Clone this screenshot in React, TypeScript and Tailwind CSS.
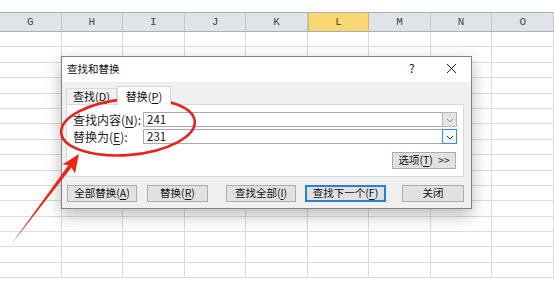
import React from 'react';

const cols = ['G', 'H', 'I', 'J', 'K', 'L', 'M', 'N', 'O'];
const rows = Array.from({ length: 16 }, (_, i) => i);

const Hot = ({ text, k }: { text: string; k: string }) => (
  <span>
    {text}(<span className="underline underline-offset-[2px]">{k}</span>)
  </span>
);

const Chevron = ({ color }: { color: string }) => (
  <svg width="12" height="12" viewBox="0 0 12 12">
    <polyline points="3,5 6,8 9,5" fill="none" stroke={color} strokeWidth="1" />
  </svg>
);

const ComboBox = ({ value, active }: { value: string; active?: boolean }) => (
  <div className="flex h-[15px] w-[314px] items-center border border-[#a9a9a9] bg-white">
    <span className="flex-1 pl-[3px] text-[11.5px] leading-none text-[#111]">{value}</span>
    <div
      className={`flex h-[15px] w-[15px] -mr-px items-center justify-center border ${
        active ? 'border-[#3b8de0] bg-[#f3f8fd]' : 'border-[#b5b5b5] bg-[#e4e4e4]'
      }`}
    >
      <Chevron color={active ? '#333' : '#8a8a8a'} />
    </div>
  </div>
);

const Btn = ({ children, w, focused }: { children: React.ReactNode; w: string; focused?: boolean }) => (
  <div
    className={`flex h-[17px] items-center justify-center bg-[#e1e1e1] text-[10.5px] leading-none text-[#111] ${w} ${
      focused ? 'border-2 border-[#2a80d8]' : 'border border-[#adadad]'
    }`}
  >
    {children}
  </div>
);

export default function App() {
  return (
    <div className="relative h-[284px] w-[554px] overflow-hidden bg-white font-['Noto_Sans_CJK_SC',sans-serif]">
      {/* sheet */}
      <div className="h-[12px]" />
      <div className="grid h-[20px] grid-cols-9 border-y border-[#a9b0b9] bg-[#e0e4e9]">
        {cols.map((c) => (
          <div
            key={c}
            className={`flex items-center justify-center border-r font-['Liberation_Mono',monospace] text-[11px] text-[#444] ${
              c === 'L' ? 'border-x border-[#e3b548] bg-[#f9d772]' : 'border-[#c3c8ce]'
            }`}
          >
            {c}
          </div>
        ))}
      </div>
      {rows.map((r) => (
        <div key={r} className="grid h-[15.4px] grid-cols-9 border-b border-[#dcdcdc]">
          {cols.map((c) => (
            <div key={c} className="border-r border-[#dcdcdc]" />
          ))}
        </div>
      ))}

      {/* dialog */}
      <div className="absolute left-[61px] top-[56px] flex h-[153px] w-[411px] flex-col border border-[#828282] bg-[#f0f0f0] shadow-[0_6px_16px_rgba(0,0,0,0.28)]">
        <div className="relative flex h-[25px] items-center bg-white pb-[2px] pl-[5px] text-[10.5px] text-[#111]">
          查找和替换
          <span className="absolute left-[347px] top-[5px] text-[12px] leading-none text-[#222]">?</span>
          <svg className="absolute left-[384px] top-[6px]" width="11" height="11" viewBox="0 0 11 11">
            <path d="M1 1 L10 10 M10 1 L1 10" stroke="#222" strokeWidth="1" />
          </svg>
        </div>

        <div className="flex flex-col pl-[4px] pt-[4px]">
          <div className="flex h-[18px] items-end">
            <div className="flex h-[16px] w-[51px] items-center justify-center border border-b-0 border-[#d9d9d9] text-[11px] leading-none text-[#111]">
              <Hot text="查找" k="D" />
            </div>
            <div className="relative z-10 -mb-px flex h-[19px] w-[54px] items-center justify-center border border-b-0 border-[#d9d9d9] bg-white text-[11px] leading-none text-[#111]">
              <Hot text="替换" k="P" />
            </div>
          </div>
          <div className="flex h-[73px] w-[398px] flex-col border border-[#d9d9d9] bg-white pl-[6px] pt-[7px]">
            <div className="flex items-center">
              <span className="w-[70px] text-[12px] leading-none text-[#222]">
                <Hot text="查找内容" k="N" />:
              </span>
              <ComboBox value="241" />
            </div>
            <div className="mt-[2px] flex items-center">
              <span className="w-[70px] text-[12px] leading-none text-[#222]">
                <Hot text="替换为" k="E" />:
              </span>
              <ComboBox value="231" active />
            </div>
            <div className="ml-[319px] mt-[8px]">
              <Btn w="w-[64px]">
                <Hot text="选项" k="T" />
                <span className="ml-[5px]">&gt;&gt;</span>
              </Btn>
            </div>
          </div>
          <div className="mt-[8px] flex items-center">
            <div className="ml-px">
              <Btn w="w-[70px]">
                <Hot text="全部替换" k="A" />
              </Btn>
            </div>
            <div className="ml-[10px]">
              <Btn w="w-[61px]">
                <Hot text="替换" k="R" />
              </Btn>
            </div>
            <div className="ml-[18px]">
              <Btn w="w-[70px]">
                <Hot text="查找全部" k="I" />
              </Btn>
            </div>
            <div className="ml-[9px]">
              <Btn w="w-[81px]" focused>
                <Hot text="查找下一个" k="F" />
              </Btn>
            </div>
            <div className="ml-[16px]">
              <Btn w="w-[62px]">关闭</Btn>
            </div>
          </div>
        </div>
      </div>

      {/* annotation */}
      <svg className="pointer-events-none absolute left-0 top-0" width="554" height="284" viewBox="0 0 554 284">
        <ellipse cx="128" cy="127" rx="67" ry="28" fill="none" stroke="#e8231a" strokeWidth="2.6" transform="rotate(-5 128 127)" />
        <polygon points="11.5,244 71.5,167.5 75,173.5 79,154 62.5,164.5 68.5,165" fill="#ee2419" />
      </svg>
    </div>
  );
}
